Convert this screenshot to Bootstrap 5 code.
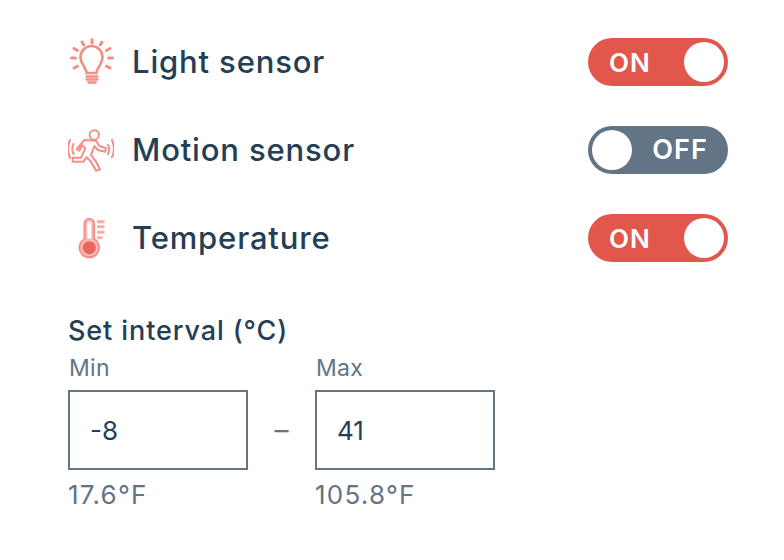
<!DOCTYPE html>
<html lang="en"><head><meta charset="utf-8"><title>Sensors</title>
<link rel="stylesheet" href="https://cdn.jsdelivr.net/npm/bootstrap@5.3.0/dist/css/bootstrap.min.css">
<style>
body{font-family:Inter,"Open Sans","Liberation Sans",sans-serif;color:#243e56;background:#fff;}
.panel{width:784px;height:560px;padding:38px 56px 0 68px;}
.sensor-row{height:48px;margin-bottom:40px;}
.sensor-ico{width:46px;height:48px;margin-right:18px;flex:none;display:block;}
.sensor-name{font-size:31px;font-weight:500;letter-spacing:.85px;line-height:48px;}
.tgl{width:140px;height:48px;border-radius:24px;padding:4px;color:#fff;font-size:26px;font-weight:600;letter-spacing:.9px;}
.tgl-on{background:#e2574c;}
.tgl-off{background:#627486;}
.knob{width:40px;height:40px;border-radius:50%;background:#fff;flex:none;}
.tgl-on .tgl-txt{margin-left:17px;}
.tgl-off .tgl-txt{margin-right:16px;font-size:27px;letter-spacing:1.1px;}
.int-title{font-size:27px;font-weight:500;line-height:30px;padding-top:14px;letter-spacing:.9px;box-sizing:content-box;}
.int-col{width:180px;}
.int-cap{font-size:23px;line-height:26px;color:#627486;margin-top:9px;margin-bottom:9px;letter-spacing:.3px;padding-left:1px;}
.form-control.int-input{width:180px;height:80px;border:2px solid #627486;border-radius:0;font-size:26px;color:#243e56;padding:0 20px;box-shadow:none;}
.int-dash{width:67px;text-align:center;font-size:28px;color:#627486;margin-top:44px;line-height:80px;}
.int-f{font-size:26px;line-height:30px;color:#627486;margin-top:10px;letter-spacing:1.25px;}
</style></head><body>
<main class="panel">
<div class="sensor-row d-flex align-items-center">
<svg class="sensor-ico" viewBox="0 0 46 48" fill="none" stroke="#f48f88" stroke-width="2.6" stroke-linecap="round">
<path d="M18.500 35c0-5-6-9-6-16a11 11 0 0 1 22 0c0 7-6 11-6 16z"/>
<path d="M18.500 38.500h11M18.500 41.500h11M20.500 44.500h7" stroke-width="2.400"/>
<path d="M24 1.500v3.500M14 4l1.800 3M34 4l-1.800 3M6 10.500l3.500 2M42 10.500l-3.500 2M3.500 20h4M40.500 20h4M6 30l3.500-1.800M42 30l-3.500-1.800" stroke-width="3"/>
</svg>
<span class="sensor-name flex-grow-1">Light sensor</span>
<div class="tgl tgl-on d-flex align-items-center justify-content-between"><span class="tgl-txt">ON</span><span class="knob"></span></div>
</div>
<div class="sensor-row d-flex align-items-center">
<svg class="sensor-ico" viewBox="0 0 46 48" fill="none" stroke="#f48f88" stroke-width="2" stroke-linecap="round" stroke-linejoin="round">
<circle cx="26.300" cy="9" r="4.700"/>
<path d="M16.300 14L28 14.700L31.300 20L38 22.300L37.300 25.700L29.700 24L26.300 20L23 29L28 35.700L32 43.300L28 44.700L23 35.700L18.700 31.300L15.300 35.700H4.700V31.700H13L17.300 22.300L14 19L11.300 24.700L8.700 23.300Z"/>
<path d="M2 14c-2.500 6-2.500 12 0 18M5.500 18c-1.500 3-1.500 7 0 10M40 19c1.500 3 1.500 6 0 9M44 14c2.500 6 2.500 12 0 17"/>
</svg>
<span class="sensor-name flex-grow-1">Motion sensor</span>
<div class="tgl tgl-off d-flex align-items-center justify-content-between"><span class="knob"></span><span class="tgl-txt">OFF</span></div>
</div>
<div class="sensor-row d-flex align-items-center">
<svg class="sensor-ico" viewBox="0 0 46 48" fill="none">
<path d="M16.500 9.500a4.800 4.800 0 0 1 9.600 0v15.500a9.800 9.800 0 1 1-9.600 0z" stroke="#f6918a" stroke-width="2" fill="#f9b9b4"/>
<path d="M19.300 9.500a2 2 0 0 1 4 0v15h-4z" fill="#fff"/>
<circle cx="21.300" cy="33.700" r="6.500" fill="#ea655c"/>
<path d="M29 7.700h7.500M29 12.700h7.500M29 18.300h7.500M29 23.700h5.500" stroke="#f8aca6" stroke-width="3"/>
</svg>
<span class="sensor-name flex-grow-1">Temperature</span>
<div class="tgl tgl-on d-flex align-items-center justify-content-between"><span class="tgl-txt">ON</span><span class="knob"></span></div>
</div>
<div class="int-title">Set interval (°C)</div>
<div class="d-flex align-items-start">
<div class="int-col"><div class="int-cap">Min</div><input class="form-control int-input" value="-8" aria-label="Min"><div class="int-f">17.6°F</div></div>
<div class="int-dash">–</div>
<div class="int-col"><div class="int-cap">Max</div><input class="form-control int-input" value="41" aria-label="Max"><div class="int-f">105.8°F</div></div>
</div>
</main>
<script src="https://cdn.jsdelivr.net/npm/bootstrap@5.3.0/dist/js/bootstrap.bundle.min.js"></script>
</body></html>
